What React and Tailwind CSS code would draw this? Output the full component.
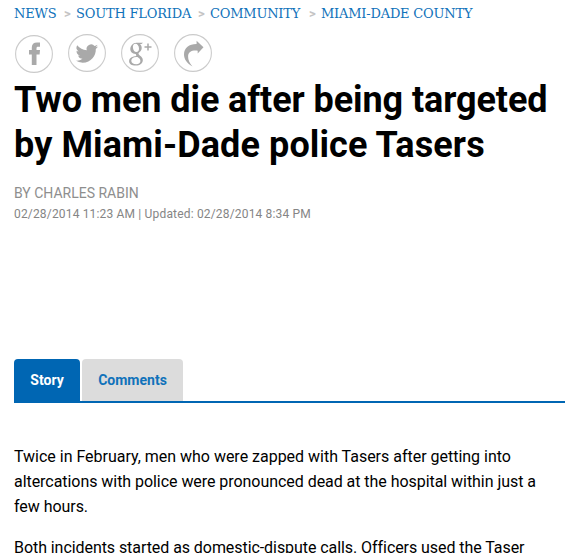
const crumbs = [
  { label: 'NEWS', box: 'w-[62px]' },
  { label: 'SOUTH FLORIDA', box: 'w-[134px]' },
  { label: 'COMMUNITY', box: 'w-[111px]' },
  { label: 'MIAMI-DADE COUNTY', box: 'w-[170px]' },
];

function Share({ label, className = '', children }) {
  return (
    <a aria-label={label} className={`block h-[38px] w-[38px] ${className}`}>
      <svg viewBox="0 0 38 38" className="h-full w-full" fill="none">
        <circle cx="19" cy="19" r="18.4" stroke="#cbcbcb" strokeWidth="1.1" />
        {children}
      </svg>
    </a>
  );
}

export default function App() {
  return (
    <main className="h-[553px] w-[565px] overflow-hidden bg-white pl-[14px] font-['Roboto',sans-serif] text-black">
      <nav className="flex h-[34px] pt-[4px] font-['DejaVu_Serif',serif] text-[13px] leading-5 tracking-[-0.2px] whitespace-nowrap text-[#1072ba]">
        {crumbs.map((c, i) => (
          <div key={c.label} className={`flex shrink-0 ${c.box}`}>
            {i > 0 && <span className="w-[11px] shrink-0 -translate-x-[12px] font-['Roboto',sans-serif] text-[13px] font-bold text-[#c4c4c4]">&gt;</span>}
            <a className={i > 0 ? '-ml-[11px]' : ''}>{c.label}</a>
          </div>
        ))}
      </nav>
      <div className="flex h-[43px] gap-[15px] pl-px">
        <Share label="Facebook" className="mt-px">
          <path fill="#a9a9a9" d="M16.8 30V19.4H14V15h2.8v-2.4c0-3.5 1.8-5.2 5.3-5.2H25v4.3h-2c-1.2 0-1.5.5-1.5 1.6V15H25l-.4 4.4h-3.1V30Z" />
        </Share>
        <Share label="Twitter">
          <path fill="#a9a9a9" transform="translate(7.6 7.9) scale(.94)" d="M23.9 5a9.7 9.7 0 0 1-2.8.8A4.9 4.9 0 0 0 23.3 3.1a9.8 9.8 0 0 1-3.1 1.2 4.9 4.9 0 0 0-8.4 4.5A13.9 13.9 0 0 1 1.7 3.6a4.9 4.9 0 0 0 1.5 6.5 4.9 4.9 0 0 1-2.2-.6v.1a4.9 4.9 0 0 0 3.9 4.8 4.9 4.9 0 0 1-2.2.1 4.9 4.9 0 0 0 4.6 3.4A9.9 9.9 0 0 1 0 19.9 13.9 13.9 0 0 0 7.5 22.1c9.1 0 14.3-7.7 14-14.6A10 10 0 0 0 23.9 5Z" />
        </Share>
        <Share label="Google Plus">
          <path
            fill="#a9a9a9"
            fillRule="evenodd"
            d="M15.3 8.7H22l-1.5 1.4h-1.6c1.2 1 1.8 2.3 1.8 3.9 0 1.8-.8 3-2 4-.9.7-1.2 1.100-1.2 1.7s.5 1.100 1.300 1.700c2 1.400 3 2.700 3 4.800 0 3-2.700 5.400-7.200 5.400-4 0-6.500-1.800-6.500-4.400 0-3.100 3.200-5 7.400-5.200-.5-.6-.8-1.200-.6-2-3.300.2-5.600-1.900-5.600-4.900 0-3.400 2.700-6.400 6-6.400Zm-.8 1.100c-1.800 0-2.800 1.500-2.600 3.800.2 2.600 1.600 4.500 3.500 4.500 1.700 0 2.700-1.400 2.600-3.600-.1-2.600-1.600-4.700-3.500-4.700Zm.9 13.200c-3 0-5.100 1.500-5.100 3.700 0 2.100 2 3.500 4.900 3.500 2.700 0 4.200-1.300 4.200-3.200 0-1.700-1-2.500-2.900-3.900Z"
          />
          <path d="M27 9.500v7M23.500 13h7" stroke="#a9a9a9" strokeWidth="1.500" />
        </Share>
        <Share label="Share">
          <path fill="#a9a9a9" d="M22.6 6.800 29.500 13.200 23.700 19.500v-2.800c-6-.6-9.500 1.300-9.600 5.600-.1 3.600 1.400 7 4.400 10.200C13 29.600 9.900 25.200 10 20.300c.1-6.300 5.200-10.300 12.600-10.200Z" />
        </Share>
      </div>
      <h1 className="pt-px text-[36px] leading-[45px] font-bold whitespace-nowrap">
        <span className="tracking-[-0.08px]">Two men die after being targeted</span>
        <br />
        <span className="tracking-[0.1px]">by Miami-Dade police Tasers</span>
      </h1>
      <div className="mt-[15px] text-[14px] leading-5 text-[#8e8e8e]">BY CHARLES RABIN</div>
      <div className="pt-px text-[12px] leading-5 tracking-[0.17px] text-[#858585]">02/28/2014 11:23 AM | Updated: 02/28/2014 8:34 PM</div>
      <div className="mt-[135px] flex h-[44px] gap-[2px] border-b-2 border-[#0066b3] text-[14px] leading-[42px] font-bold">
        <button className="w-[66px] rounded-t-[4px] bg-[#0066b3] text-white">Story</button>
        <button className="w-[101px] rounded-t-[4px] bg-[#dcdcdc] text-[#1072ba]">Comments</button>
      </div>
      <p className="mt-[41px] text-[16px] leading-[25px] tracking-[-0.05px] whitespace-nowrap">
        <span className="tracking-[-0.015px]">Twice in February, men who were zapped with Tasers after getting into</span>
        <br />
        altercations with police were pronounced dead at the hospital within just a
        <br />
        few hours.
      </p>
      <p className="mt-[16px] text-[16px] leading-[25px] tracking-[-0.065px] whitespace-nowrap">
        Both incidents started as domestic-dispute calls. Officers used the Taser
      </p>
    </main>
  );
}
